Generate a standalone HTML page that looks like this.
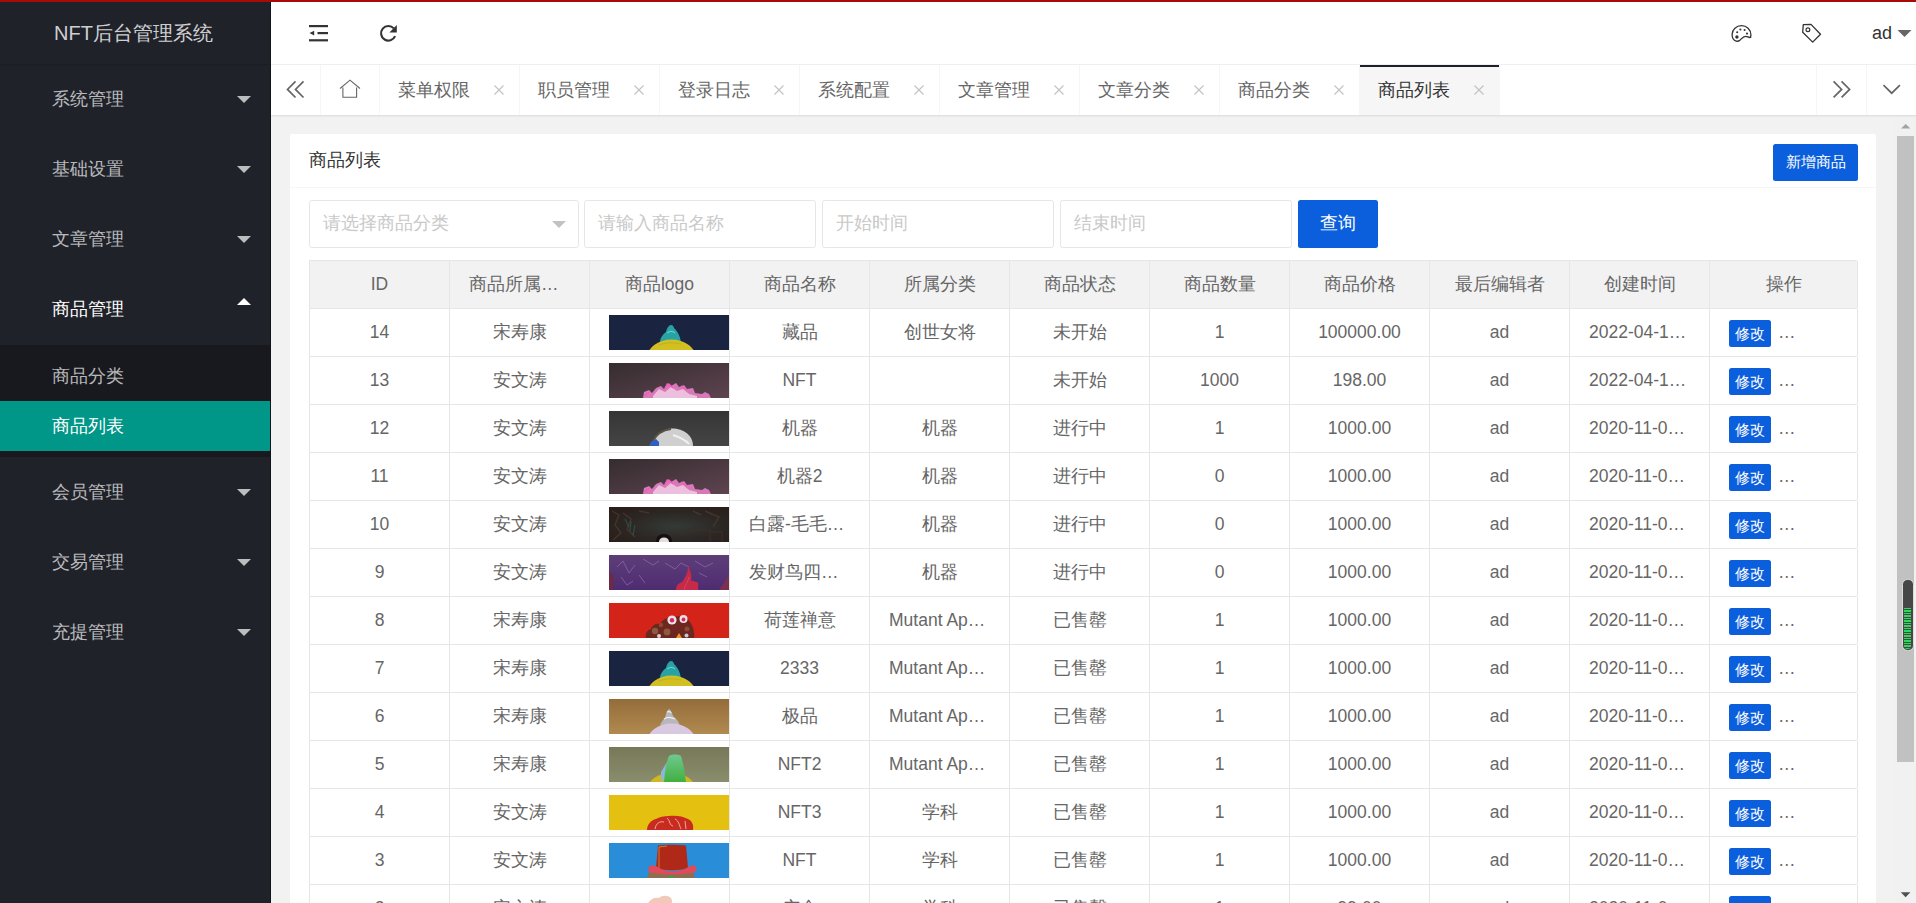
<!DOCTYPE html><html><head><meta charset="utf-8"><style>*{box-sizing:border-box;margin:0;padding:0}
html,body{width:1916px;height:903px;overflow:hidden;background:#f2f2f2;font-family:"Liberation Sans",sans-serif;font-size:17.5px;color:#666}
#topline{position:absolute;left:0;top:0;width:1916px;height:2px;background:#a80909;z-index:10}
#side{position:absolute;left:0;top:0;width:271px;height:903px;background:#20222a;color:rgba(255,255,255,.7)}
#side .logo{position:absolute;left:0;top:0;width:270px;height:64px;line-height:66px;text-align:center;font-size:20px;color:rgba(255,255,255,.8);box-shadow:0 1px 2px 0 rgba(0,0,0,.15)}
#side .sideedge{position:absolute;left:270px;top:0;width:1px;height:903px;background:#0d1219}
.mi{position:absolute;left:0;width:270px;height:70px;line-height:70px}
.mi span{position:absolute;left:53px;top:0}
.mi.open{color:#fff}
.mi em{position:absolute;left:236px;top:32px;width:0;height:0;border-style:solid;border-width:7.5px 7.5px 0;border-color:rgba(255,255,255,.7) transparent transparent}
.mi em.up{top:24px;border-width:0 7.5px 7.5px;border-color:transparent transparent #fff}
.child{position:absolute;left:0;top:345px;width:270px;height:112px;background:#18191e}
.ci{position:absolute;left:0;width:270px;height:50px;line-height:50px}
.ci span{position:absolute;left:53px}
.ci.sel{background:#009688;color:#fff}
#header{position:absolute;left:271px;top:2px;width:1645px;height:63px;background:#fff;border-bottom:1px solid #f0f0f0}
.ico{position:absolute}
.user{position:absolute;left:1600px;top:0;line-height:62px;font-size:18px;color:#333}
#tabs{position:absolute;left:271px;top:65px;width:1645px;height:50px;background:#fff;box-shadow:0 1px 2px 0 rgba(0,0,0,.1);z-index:2}
.tsep{position:absolute;top:0;width:1px;height:50px;background:#f6f6f6}
.tab{position:absolute;top:0;width:140px;height:50px;line-height:50px;border-right:1px solid #f6f6f6;color:#666}
.tab span{position:absolute;left:18px;top:0}
.tab .cl{position:absolute;left:112.5px;top:19px}
.tab.act{background:#f6f6f6;color:#333}
.tab.act:before{content:"";position:absolute;left:0;top:0;width:139px;height:2px;background:#1e2029}
#card{position:absolute;left:290px;top:134px;width:1586px;height:800px;background:#fff;border-radius:2.5px}
.chd{position:absolute;left:19px;top:0;height:53px;line-height:53px;color:#333}
.cline{position:absolute;left:0;top:53px;width:1586px;height:1px;background:#f6f6f6}
.btn-sm{position:absolute;left:1483px;top:10px;width:85px;height:37.5px;line-height:37.5px;text-align:center;font-size:15px;color:#fff;background:#0b5fdd;border-radius:2.5px}
.inp{position:absolute;top:66px;height:47.5px;border:1px solid #e6e6e6;border-radius:2.5px;background:#fff}
.inp span{position:absolute;left:13px;top:0;line-height:45.5px;color:#c2c2c2}
.inp.sel em{position:absolute;left:242px;top:20px;width:0;height:0;border-style:solid;border-width:7.5px 7.5px 0;border-color:#c2c2c2 transparent transparent}
.btn{position:absolute;left:1008px;top:66px;width:80px;height:47.5px;line-height:47.5px;text-align:center;color:#fff;background:#0b5fdd;border-radius:2.5px}
#tbl{position:absolute;left:19px;top:126px;width:1548px;border-left:1px solid #e6e6e6;border-top:1px solid #e6e6e6}
.tr{position:relative;height:48px;border-bottom:1px solid #e6e6e6;background:#fff}
.tr.th{background:#f2f2f2}
.td{position:absolute;top:0;height:47px;line-height:47px;text-align:center;border-right:1px solid #e6e6e6;overflow:hidden;white-space:nowrap}
.c0{left:0;width:140px}.c1{left:140px;width:140px}.c2{left:280px;width:140px}.c3{left:420px;width:140px}.c4{left:560px;width:140px}.c5{left:700px;width:140px}.c6{left:840px;width:140px}.c7{left:980px;width:140px}.c8{left:1120px;width:140px}.c9{left:1260px;width:140px}.c10{left:1400px;width:147px;text-align:left}
.c10 .xs{position:absolute;left:19px;top:11px;width:42px;height:27px;line-height:27px;text-align:center;font-size:15px;color:#fff;background:#0b5fdd;border-radius:2.5px}
.c10 .dots{position:absolute;left:68px;top:0}
.thumb{position:absolute;left:19px;top:6px;width:120px;height:35px;overflow:hidden}
#sb{position:absolute;left:1895px;top:115px;width:21px;height:788px;background:#f1f1f1}
#sb .thumbbar{position:absolute;left:2px;top:21px;width:17px;height:624px;background:#c1c1c1}
.td.ov{text-align:left;padding-left:19px}
.c10{width:148px}
.c10.ctr{text-align:center}
.user{left:1601px}
#sb .meter{position:absolute;left:7.5px;top:463.5px;width:11px;height:72px;border:1px solid #dcdcdc;border-radius:5.5px;background:#474747}
#sb .meter i{position:absolute;left:1px;top:28px;width:7px;height:41px;border-radius:0 0 3px 3px;background:repeating-linear-gradient(to bottom,#2ed85a 0,#2ed85a 1.2px,#474747 1.2px,#474747 2px,#2ed85a 2px,#2ed85a 4.2px,#474747 4.2px,#474747 5px)}
.mi span,.ci span{left:52.5px}
.mi em{left:237px;border-width:7.6px 7.6px 0}
.mi em.up{border-width:0 7.6px 7.6px}
#side .logo{text-indent:-3px}
#sb .meter{left:7px;width:11.5px}
#sb .thumbbar{height:625.5px}
.btn-sm{height:37px;line-height:37px}
.inp span{color:#c9c9c9}
.mi span,.ci span{left:51.7px}
#side .sideedge{background:#12151c}
.btn-sm{line-height:35px}
</style></head><body>
<div id="topline"></div>
<div id="side"><div class="logo">NFT后台管理系统</div>
<div class="mi" style="top:64px"><span>系统管理</span><em class="down"></em></div>
<div class="mi" style="top:134px"><span>基础设置</span><em class="down"></em></div>
<div class="mi" style="top:204px"><span>文章管理</span><em class="down"></em></div>
<div class="mi open" style="top:274px"><span>商品管理</span><em class="up"></em></div>
<div class="child"><div class="ci" style="top:6px"><span>商品分类</span></div><div class="ci sel" style="top:56px"><span>商品列表</span></div></div>
<div class="mi" style="top:457px"><span>会员管理</span><em class="down"></em></div>
<div class="mi" style="top:527px"><span>交易管理</span><em class="down"></em></div>
<div class="mi" style="top:597px"><span>充提管理</span><em class="down"></em></div>
<div class="sideedge"></div></div>
<div id="header">
<svg class="ico" style="left:-271px;top:-2px" width="1916" height="64" viewBox="0 0 1916 64">
<rect x="309" y="25" width="19" height="2.2" fill="#333"/>
<rect x="317.5" y="32" width="10.5" height="2.2" fill="#333"/>
<rect x="309" y="39.2" width="19" height="2.2" fill="#333"/>
<path d="M309.5 33.1 L314.2 30.8 L314.2 35.6 Z" fill="#333"/>
<path d="M395.1 36.1 A7.3 7.3 0 1 1 393.8 28.4" fill="none" stroke="#333" stroke-width="2.1"/>
<path d="M389.4 32.6 L396.8 25.1 L396.8 32.6 Z" fill="#333"/>
<path d="M1741.5 25.7 C1746.6 25.7 1750.9 29.6 1750.9 35 L1750.6 37.4 C1748.8 38 1747.6 36.3 1745.6 36.3 C1743.2 36.3 1741.7 38.4 1740.2 39.9 C1738.8 41.2 1737.3 41.4 1736.2 41.1 C1733.6 40.4 1732.1 37.9 1732.1 34.5 C1732.1 29.5 1736.4 25.7 1741.5 25.7 Z" fill="none" stroke="#333" stroke-width="1.3"/>
<circle cx="1740.4" cy="29.5" r="1.05" fill="#333"/><circle cx="1744.6" cy="30" r="1.05" fill="#333"/>
<circle cx="1737.2" cy="32.2" r="1.05" fill="#333"/><circle cx="1747" cy="33.6" r="1.05" fill="#333"/>
<circle cx="1736.9" cy="37" r="1.7" fill="#333"/>
<path d="M1803.3 24.6 L1811 24.4 L1820.5 34.3 L1812.7 42.1 L1802.7 32.3 Z" fill="none" stroke="#333" stroke-width="1.3" stroke-linejoin="round"/>
<circle cx="1807.9" cy="29.8" r="1.9" fill="none" stroke="#333" stroke-width="1.2"/>
<path d="M1897.5 30 L1911.5 30 L1904.5 37 Z" fill="#666"/>
</svg><div class="user">ad</div>
</div>
<div id="tabs"><div class="tsep" style="left:49px"></div><div class="tsep" style="left:108px"></div>
<div class="tab" style="left:109px"><span>菜单权限</span><svg class="cl" width="12" height="12" viewBox="0 0 12 12"><path d="M1.5 1.5L10.5 10.5M10.5 1.5L1.5 10.5" stroke="#c2c2c2" stroke-width="1.1"/></svg></div>
<div class="tab" style="left:249px"><span>职员管理</span><svg class="cl" width="12" height="12" viewBox="0 0 12 12"><path d="M1.5 1.5L10.5 10.5M10.5 1.5L1.5 10.5" stroke="#c2c2c2" stroke-width="1.1"/></svg></div>
<div class="tab" style="left:389px"><span>登录日志</span><svg class="cl" width="12" height="12" viewBox="0 0 12 12"><path d="M1.5 1.5L10.5 10.5M10.5 1.5L1.5 10.5" stroke="#c2c2c2" stroke-width="1.1"/></svg></div>
<div class="tab" style="left:529px"><span>系统配置</span><svg class="cl" width="12" height="12" viewBox="0 0 12 12"><path d="M1.5 1.5L10.5 10.5M10.5 1.5L1.5 10.5" stroke="#c2c2c2" stroke-width="1.1"/></svg></div>
<div class="tab" style="left:669px"><span>文章管理</span><svg class="cl" width="12" height="12" viewBox="0 0 12 12"><path d="M1.5 1.5L10.5 10.5M10.5 1.5L1.5 10.5" stroke="#c2c2c2" stroke-width="1.1"/></svg></div>
<div class="tab" style="left:809px"><span>文章分类</span><svg class="cl" width="12" height="12" viewBox="0 0 12 12"><path d="M1.5 1.5L10.5 10.5M10.5 1.5L1.5 10.5" stroke="#c2c2c2" stroke-width="1.1"/></svg></div>
<div class="tab" style="left:949px"><span>商品分类</span><svg class="cl" width="12" height="12" viewBox="0 0 12 12"><path d="M1.5 1.5L10.5 10.5M10.5 1.5L1.5 10.5" stroke="#c2c2c2" stroke-width="1.1"/></svg></div>
<div class="tab act" style="left:1089px"><span>商品列表</span><svg class="cl" width="12" height="12" viewBox="0 0 12 12"><path d="M1.5 1.5L10.5 10.5M10.5 1.5L1.5 10.5" stroke="#c2c2c2" stroke-width="1.1"/></svg></div>
<div class="tsep" style="left:1544.5px"></div><div class="tsep" style="left:1594.5px"></div>
<svg class="ico" style="left:-271px;top:-65px" width="1916" height="115" viewBox="0 0 1916 115">
<path d="M295.5 81.3 L287.5 89.4 L295.5 97.5 M303.5 81.3 L295.5 89.4 L303.5 97.5" fill="none" stroke="#666" stroke-width="1.7"/>
<path d="M340 88.5 L350 80.2 L360 88.5 M342.9 87.6 L342.9 97.3 L356.6 97.3 L356.6 87.6" fill="none" stroke="#666" stroke-width="1.1"/>
<path d="M1833.6 81.4 L1841.6 89.4 L1833.6 97.4 M1841.6 81.4 L1849.6 89.4 L1841.6 97.4" fill="none" stroke="#666" stroke-width="1.7"/>
<path d="M1883.5 85.2 L1891.7 93.2 L1899.9 85.2" fill="none" stroke="#666" stroke-width="1.7"/>
</svg></div>
<div id="card"><div class="chd">商品列表</div><div class="btn-sm">新增商品</div><div class="cline"></div>
<div class="inp sel" style="left:19px;width:270px"><span>请选择商品分类</span><em></em></div>
<div class="inp" style="left:294px;width:232px"><span>请输入商品名称</span></div>
<div class="inp" style="left:532px;width:232px"><span>开始时间</span></div>
<div class="inp" style="left:770px;width:232px"><span>结束时间</span></div>
<div class="btn">查询</div>
<div id="tbl">
<div class="tr th"><div class="td c0">ID</div><div class="td c1 ov">商品所属…</div><div class="td c2">商品logo</div><div class="td c3">商品名称</div><div class="td c4">所属分类</div><div class="td c5">商品状态</div><div class="td c6">商品数量</div><div class="td c7">商品价格</div><div class="td c8">最后编辑者</div><div class="td c9">创建时间</div><div class="td c10 ctr">操作</div></div>
<div class="tr"><div class="td c0">14</div><div class="td c1">宋寿康</div><div class="td c2"><div class="thumb"><svg width="120" height="35" viewBox="0 0 120 35"><rect width="120" height="35" fill="#1a2440"/>
<path d="M51 30 C50 24 54 19 57 17 C58 13 60 10 62 10 C64 10 65 12 65 13 C69 17 72 22 72 30 Z" fill="#27a3a6"/>
<path d="M58 18 C61 16 64 16 66 18" stroke="#5fd0cc" stroke-width="1.2" fill="none"/>
<ellipse cx="62.5" cy="43" rx="24.5" ry="18.5" fill="#d2bf22"/>
<path d="M50 30 Q60 26 72 29" stroke="#b3a018" stroke-width=".5" fill="none"/></svg></div></div><div class="td c3">藏品</div><div class="td c4">创世女将</div><div class="td c5">未开始</div><div class="td c6">1</div><div class="td c7">100000.00</div><div class="td c8">ad</div><div class="td c9 ov">2022-04-1…</div><div class="td c10"><span class="xs">修改</span><span class="dots">…</span></div></div>
<div class="tr"><div class="td c0">13</div><div class="td c1">安文涛</div><div class="td c2"><div class="thumb"><svg width="120" height="35" viewBox="0 0 120 35"><defs><linearGradient id="g2" x1="0" y1="0" x2="1" y2="1"><stop offset="0" stop-color="#352d2f"/><stop offset="1" stop-color="#5e4350"/></linearGradient></defs>
<rect width="120" height="35" fill="url(#g2)"/>
<path d="M34 35 L35 29 L40 27 L43 30 L47 25 L52 23 L55 26 L58 20 L62 23 L67 20 L70 24 L75 22 L78 26 L84 25 L86 30 L93 31 L96 29 L100 31 L102 35 Z" fill="#d878b8"/>
<path d="M44 33 L50 26 L56 29 L62 24 L68 28 L74 26 L80 31 L88 33 L88 35 L44 35 Z" fill="#ecc0dc"/>
<path d="M36 33 L40 29 M56 25 L60 21 L64 25 M72 23 L77 27" stroke="#ff55c0" stroke-width="1.3" fill="none"/></svg></div></div><div class="td c3">NFT</div><div class="td c4"></div><div class="td c5">未开始</div><div class="td c6">1000</div><div class="td c7">198.00</div><div class="td c8">ad</div><div class="td c9 ov">2022-04-1…</div><div class="td c10"><span class="xs">修改</span><span class="dots">…</span></div></div>
<div class="tr"><div class="td c0">12</div><div class="td c1">安文涛</div><div class="td c2"><div class="thumb"><svg width="120" height="35" viewBox="0 0 120 35"><defs><linearGradient id="g3" x1="0" y1="0" x2="0" y2="1"><stop offset="0" stop-color="#353535"/><stop offset="1" stop-color="#454545"/></linearGradient></defs>
<rect width="120" height="35" fill="url(#g3)"/>
<path d="M42 35 C44 26 52 18 62 17.5 C74 17 84 24 84 35 Z" fill="#cfcfcf"/>
<path d="M44 30 C48 22 54 19 62 18" stroke="#5a5048" stroke-width="2" fill="none"/>
<path d="M40 35 L42 31 L47 28 L50 31 L50 35 Z" fill="#2f5fc0"/>
<path d="M64 24 C70 26 76 28 80 33" stroke="#f0f0f0" stroke-width="2" fill="none"/></svg></div></div><div class="td c3">机器</div><div class="td c4">机器</div><div class="td c5">进行中</div><div class="td c6">1</div><div class="td c7">1000.00</div><div class="td c8">ad</div><div class="td c9 ov">2020-11-0…</div><div class="td c10"><span class="xs">修改</span><span class="dots">…</span></div></div>
<div class="tr"><div class="td c0">11</div><div class="td c1">安文涛</div><div class="td c2"><div class="thumb"><svg width="120" height="35" viewBox="0 0 120 35"><defs><linearGradient id="g2" x1="0" y1="0" x2="1" y2="1"><stop offset="0" stop-color="#352d2f"/><stop offset="1" stop-color="#5e4350"/></linearGradient></defs>
<rect width="120" height="35" fill="url(#g2)"/>
<path d="M34 35 L35 29 L40 27 L43 30 L47 25 L52 23 L55 26 L58 20 L62 23 L67 20 L70 24 L75 22 L78 26 L84 25 L86 30 L93 31 L96 29 L100 31 L102 35 Z" fill="#d878b8"/>
<path d="M44 33 L50 26 L56 29 L62 24 L68 28 L74 26 L80 31 L88 33 L88 35 L44 35 Z" fill="#ecc0dc"/>
<path d="M36 33 L40 29 M56 25 L60 21 L64 25 M72 23 L77 27" stroke="#ff55c0" stroke-width="1.3" fill="none"/></svg></div></div><div class="td c3">机器2</div><div class="td c4">机器</div><div class="td c5">进行中</div><div class="td c6">0</div><div class="td c7">1000.00</div><div class="td c8">ad</div><div class="td c9 ov">2020-11-0…</div><div class="td c10"><span class="xs">修改</span><span class="dots">…</span></div></div>
<div class="tr"><div class="td c0">10</div><div class="td c1">安文涛</div><div class="td c2"><div class="thumb"><svg width="120" height="35" viewBox="0 0 120 35"><defs><radialGradient id="g4" cx=".55" cy=".55" r=".65"><stop offset="0" stop-color="#343a36"/><stop offset=".6" stop-color="#2c2724"/><stop offset="1" stop-color="#2a1f1b"/></radialGradient></defs>
<rect width="120" height="35" fill="url(#g4)"/>
<path d="M3 4 L10 8 L6 18 L12 26 L4 33 M14 6 L22 12 L18 22 L26 30 M30 4 L40 6 M96 4 L110 10 L104 20 M84 4 L92 8" stroke="#4a3830" stroke-width="1.4" fill="none" opacity=".8"/>
<path d="M16 12 L20 20 M22 14 L21 24 M26 18 L24 28" stroke="#2f6060" stroke-width="1.3" opacity=".6"/>
<path d="M74 23 L101 23 L101 35 M100 25 L113 25 L113 35" stroke="#3c2e28" stroke-width="1.2" fill="none"/>
<path d="M47 35 C47 30 50 27 55 27 C60 27 63 30 63 35 Z" fill="#151011"/>
<path d="M50 35 C50 32 52 30.5 55 30.5 C58 30.5 60 32 60 35 Z" fill="#e6dcd8"/></svg></div></div><div class="td c3 ov">白露-毛毛…</div><div class="td c4">机器</div><div class="td c5">进行中</div><div class="td c6">0</div><div class="td c7">1000.00</div><div class="td c8">ad</div><div class="td c9 ov">2020-11-0…</div><div class="td c10"><span class="xs">修改</span><span class="dots">…</span></div></div>
<div class="tr"><div class="td c0">9</div><div class="td c1">安文涛</div><div class="td c2"><div class="thumb"><svg width="120" height="35" viewBox="0 0 120 35"><defs><linearGradient id="g5" x1="0" y1="0" x2="0" y2="1"><stop offset="0" stop-color="#5e3e78"/><stop offset="1" stop-color="#4e2c72"/></linearGradient></defs>
<rect width="120" height="35" fill="url(#g5)"/>
<path d="M8 12 L14 6 L20 18 L26 10 M12 22 L18 30 L24 26 M34 4 L44 10 L50 6 M56 8 L66 14 L72 8 L80 12 M86 6 L96 12 L104 8 M30 20 L36 28 M90 18 L98 22" stroke="#9a6ab8" stroke-width=".9" fill="none" opacity=".75"/>
<path d="M0 16 L5 22 L4 35 L0 35 Z" fill="#6a2a48"/>
<path d="M110 35 L120 20 L120 35 Z" fill="#7a3050"/>
<path d="M67 35 C67 30 70 28 73 27 C76 23 79 18 79 11 C82 16 83 22 82 26 C85 25 87 28 89 27 C90 31 88 33 90 35 Z" fill="#c52a48"/>
<path d="M75 35 C76 30 79 27 80 22" stroke="#e04060" stroke-width="1" fill="none"/></svg></div></div><div class="td c3 ov">发财鸟四…</div><div class="td c4">机器</div><div class="td c5">进行中</div><div class="td c6">0</div><div class="td c7">1000.00</div><div class="td c8">ad</div><div class="td c9 ov">2020-11-0…</div><div class="td c10"><span class="xs">修改</span><span class="dots">…</span></div></div>
<div class="tr"><div class="td c0">8</div><div class="td c1">宋寿康</div><div class="td c2"><div class="thumb"><svg width="120" height="35" viewBox="0 0 120 35"><rect width="120" height="35" fill="#d4241a"/>
<path d="M37 35 C36 31 38 27 42 26 C43 22 47 20 51 21 C53 17 58 14 64 14 C71 12 78 14 81 19 C84 23 86 30 85 35 Z" fill="#6e2620"/>
<circle cx="46" cy="28" r="3.2" fill="#8c5a3e"/><circle cx="58" cy="29" r="3.4" fill="#8c5a3e"/><circle cx="52" cy="22" r="2.2" fill="#8a4a36"/><circle cx="78" cy="26" r="2.5" fill="#8a4a36"/>
<circle cx="63" cy="17" r="4.6" fill="#ece4e4"/><circle cx="63" cy="17.3" r="2.2" fill="#d8246a"/>
<circle cx="74.5" cy="16" r="4" fill="#ece4e4"/><circle cx="74.5" cy="16.5" r="1.9" fill="#d8246a"/>
<path d="M67 35 L70 30 L73 35 Z" fill="#e89a20"/>
<circle cx="77.5" cy="32.5" r="2" fill="#c8c8c8"/><circle cx="50" cy="33" r="2" fill="#d8d0d0"/></svg></div></div><div class="td c3">荷莲禅意</div><div class="td c4 ov">Mutant Ap…</div><div class="td c5">已售罄</div><div class="td c6">1</div><div class="td c7">1000.00</div><div class="td c8">ad</div><div class="td c9 ov">2020-11-0…</div><div class="td c10"><span class="xs">修改</span><span class="dots">…</span></div></div>
<div class="tr"><div class="td c0">7</div><div class="td c1">宋寿康</div><div class="td c2"><div class="thumb"><svg width="120" height="35" viewBox="0 0 120 35"><rect width="120" height="35" fill="#1a2440"/>
<path d="M51 30 C50 24 54 19 57 17 C58 13 60 10 62 10 C64 10 65 12 65 13 C69 17 72 22 72 30 Z" fill="#27a3a6"/>
<path d="M58 18 C61 16 64 16 66 18" stroke="#5fd0cc" stroke-width="1.2" fill="none"/>
<ellipse cx="62.5" cy="43" rx="24.5" ry="18.5" fill="#d2bf22"/>
<path d="M50 30 Q60 26 72 29" stroke="#b3a018" stroke-width=".5" fill="none"/></svg></div></div><div class="td c3">2333</div><div class="td c4 ov">Mutant Ap…</div><div class="td c5">已售罄</div><div class="td c6">1</div><div class="td c7">1000.00</div><div class="td c8">ad</div><div class="td c9 ov">2020-11-0…</div><div class="td c10"><span class="xs">修改</span><span class="dots">…</span></div></div>
<div class="tr"><div class="td c0">6</div><div class="td c1">宋寿康</div><div class="td c2"><div class="thumb"><svg width="120" height="35" viewBox="0 0 120 35"><defs><linearGradient id="g7" x1="0" y1="0" x2="0" y2="1"><stop offset="0" stop-color="#946c3a"/><stop offset="1" stop-color="#b08a50"/></linearGradient></defs>
<rect width="120" height="35" fill="url(#g7)"/>
<path d="M51 29 C51 24 54 21 56 19 C57 14 58 11 60 10 C62 11 63 14 64 17 C68 20 71 24 71 29 Z" fill="#b8b8bc"/>
<path d="M55 20 C58 18 62 18 66 20 M58 13 C60 12 62 13 62 14" stroke="#f0f0f0" stroke-width="1.2" fill="none"/>
<ellipse cx="62.5" cy="43" rx="24.5" ry="18.5" fill="#d8c8e0"/></svg></div></div><div class="td c3">极品</div><div class="td c4 ov">Mutant Ap…</div><div class="td c5">已售罄</div><div class="td c6">1</div><div class="td c7">1000.00</div><div class="td c8">ad</div><div class="td c9 ov">2020-11-0…</div><div class="td c10"><span class="xs">修改</span><span class="dots">…</span></div></div>
<div class="tr"><div class="td c0">5</div><div class="td c1">宋寿康</div><div class="td c2"><div class="thumb"><svg width="120" height="35" viewBox="0 0 120 35"><defs><linearGradient id="g8" x1="0" y1="0" x2="0" y2="1"><stop offset="0" stop-color="#777858"/><stop offset="1" stop-color="#8a8e6c"/></linearGradient>
<linearGradient id="g8b" x1="0" y1="0" x2="0" y2="1"><stop offset="0" stop-color="#70c890"/><stop offset="1" stop-color="#40b040"/></linearGradient></defs>
<rect width="120" height="35" fill="url(#g8)"/>
<ellipse cx="62.5" cy="43" rx="24.5" ry="17" fill="#d2b81e"/>
<path d="M52 35 L52 25 L58 15 L58 30 Z" fill="#8ab8d8"/>
<path d="M55 35 C56 25 57 15 60 9 C62 7 70 7 72 9 C74 15 76 25 77 35 Z" fill="url(#g8b)"/></svg></div></div><div class="td c3">NFT2</div><div class="td c4 ov">Mutant Ap…</div><div class="td c5">已售罄</div><div class="td c6">1</div><div class="td c7">1000.00</div><div class="td c8">ad</div><div class="td c9 ov">2020-11-0…</div><div class="td c10"><span class="xs">修改</span><span class="dots">…</span></div></div>
<div class="tr"><div class="td c0">4</div><div class="td c1">安文涛</div><div class="td c2"><div class="thumb"><svg width="120" height="35" viewBox="0 0 120 35"><rect width="120" height="35" fill="#e4c010"/>
<path d="M38 35 C38 30 42 25 47 24 C50 22 55 21 60 21 C66 20 74 21 79 24 C83 26 85 30 84 35 Z" fill="#c92c1e"/>
<path d="M46 34 C47 28 51 26 55 27 M58 23 C62 27 60 30 64 31 M66 24 C70 26 70 30 72 34 M76 26 L77 34" stroke="#f3c8c0" stroke-width=".8" fill="none"/></svg></div></div><div class="td c3">NFT3</div><div class="td c4">学科</div><div class="td c5">已售罄</div><div class="td c6">1</div><div class="td c7">1000.00</div><div class="td c8">ad</div><div class="td c9 ov">2020-11-0…</div><div class="td c10"><span class="xs">修改</span><span class="dots">…</span></div></div>
<div class="tr"><div class="td c0">3</div><div class="td c1">安文涛</div><div class="td c2"><div class="thumb"><svg width="120" height="35" viewBox="0 0 120 35"><rect width="120" height="35" fill="#2a8dd8"/>
<path d="M38 35 L40 29 L84 29 L86 35 Z" fill="#8a7050"/>
<path d="M49 2.5 C55 1.5 70 1.5 77 2.5 L79 25 C70 28 56 28 47 25 Z" fill="#b02818"/>
<path d="M50 26 L50 4 L58 3" stroke="#d8a030" stroke-width=".7" fill="none"/>
<path d="M40 24 C44 20 48 24 52 26 C60 29 68 29 76 26 C80 24 84 20 87 24 C89 28 85 31 80 30 C70 32 56 32 46 30 C41 31 38 28 40 24 Z" fill="#e04a5a"/>
<circle cx="62" cy="35" r="2.5" fill="#40a040"/></svg></div></div><div class="td c3">NFT</div><div class="td c4">学科</div><div class="td c5">已售罄</div><div class="td c6">1</div><div class="td c7">1000.00</div><div class="td c8">ad</div><div class="td c9 ov">2020-11-0…</div><div class="td c10"><span class="xs">修改</span><span class="dots">…</span></div></div>
<div class="tr"><div class="td c0">2</div><div class="td c1">安文涛</div><div class="td c2"><div class="thumb"><svg width="120" height="35" viewBox="0 0 120 35"><rect width="120" height="35" fill="#ffffff"/>
<path d="M39 12 C42 7 47 6 50 7 C53 4 59 4 62 7 C64 10 63 14 62 16 L40 16 Z" fill="#f2c8b8"/></svg></div></div><div class="td c3">广金</div><div class="td c4">学科</div><div class="td c5">已售罄</div><div class="td c6">1</div><div class="td c7">99.00</div><div class="td c8">ad</div><div class="td c9 ov">2020-11-0…</div><div class="td c10"><span class="xs">修改</span><span class="dots">…</span></div></div>
</div></div>
<div id="sb"><div class="thumbbar"></div><div class="meter"><i></i></div><svg class="ico" style="left:0;top:0" width="21" height="788" viewBox="1895 115 21 788"><path d="M1901 128.6 L1910.4 128.6 L1905.7 123.9 Z" fill="#a3a3a3"/><path d="M1900.8 892.3 L1910.4 892.3 L1905.6 897.3 Z" fill="#505050"/></svg></div>
</body></html>
